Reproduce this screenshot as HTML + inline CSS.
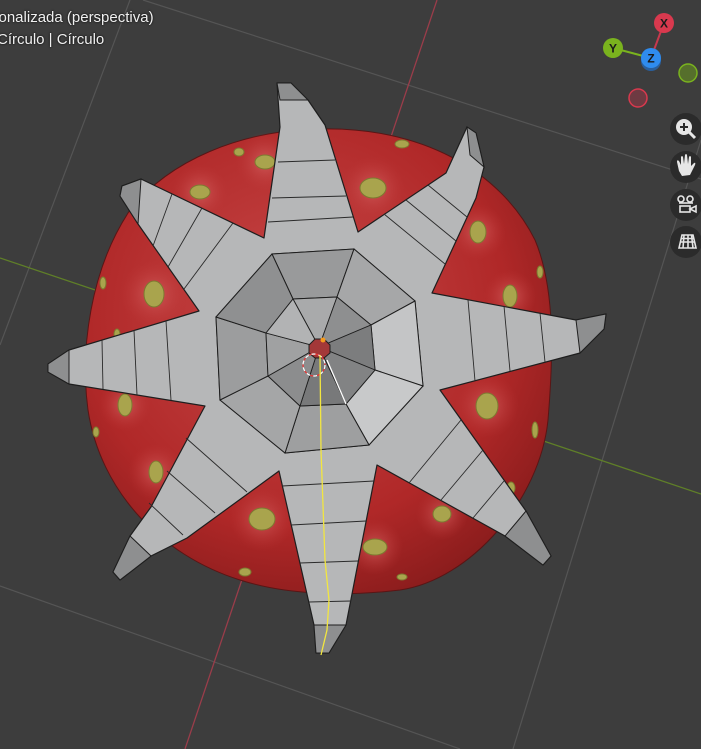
<!DOCTYPE html>
<html><head><meta charset="utf-8"><style>
html,body{margin:0;padding:0;background:#3d3d3d;width:701px;height:749px;overflow:hidden;position:relative;font-family:"Liberation Sans",sans-serif}
.t{position:absolute;color:#f0f0f0;font-size:15px;white-space:nowrap;text-shadow:0 0 2px #000}
</style></head><body>
<svg width="701" height="749" viewBox="0 0 701 749" style="position:absolute;left:0;top:0">
<defs>
<radialGradient id="rb" cx="0.45" cy="0.4" r="0.65">
<stop offset="0" stop-color="#c84848"/><stop offset="0.7" stop-color="#b02828"/><stop offset="1" stop-color="#8a1c1c"/>
</radialGradient>
<radialGradient id="sp" cx="0.5" cy="0.5" r="0.5">
<stop offset="0" stop-color="#d86a6a" stop-opacity="0.7"/><stop offset="1" stop-color="#c03838" stop-opacity="0"/>
</radialGradient>
</defs>
<line x1="130" y1="0" x2="0" y2="345" stroke="#555" stroke-width="1.2"/>
<line x1="143" y1="0" x2="701" y2="179" stroke="#555" stroke-width="1.2"/>
<line x1="701" y1="140" x2="513" y2="749" stroke="#555" stroke-width="1.2"/>
<line x1="0" y1="586" x2="460" y2="749" stroke="#555" stroke-width="1.2"/>
<line x1="437" y1="0" x2="185" y2="749" stroke="#9a3d4a" stroke-width="1.3"/>
<line x1="0" y1="258" x2="701" y2="494" stroke="#5f7f28" stroke-width="1.3"/>
<path d="M318,129 C420,126 500,170 535,240 C556,290 553,360 548,420 C540,500 470,580 400,590 C350,596 290,596 240,580 C160,555 100,490 88,410 C80,350 90,270 130,210 C170,160 240,131 318,129 Z" fill="url(#rb)" stroke="#5a1515" stroke-width="1"/>
<g fill="url(#sp)">
<circle cx="265" cy="162" r="30"/><circle cx="200" cy="192" r="28"/><circle cx="373" cy="188" r="32"/>
<circle cx="154" cy="294" r="34"/><circle cx="478" cy="232" r="28"/><circle cx="510" cy="296" r="26"/>
<circle cx="487" cy="406" r="32"/><circle cx="125" cy="405" r="26"/><circle cx="156" cy="472" r="28"/>
<circle cx="262" cy="519" r="32"/><circle cx="375" cy="547" r="28"/><circle cx="442" cy="514" r="26"/>
</g>
<g fill="#a9a44d" stroke="#7d7a30" stroke-width="1">
<ellipse cx="265" cy="162" rx="10" ry="7"/><ellipse cx="200" cy="192" rx="10" ry="7"/><ellipse cx="373" cy="188" rx="13" ry="10"/>
<ellipse cx="154" cy="294" rx="10" ry="13"/><ellipse cx="478" cy="232" rx="8" ry="11"/><ellipse cx="510" cy="296" rx="7" ry="11"/>
<ellipse cx="487" cy="406" rx="11" ry="13"/><ellipse cx="125" cy="405" rx="7" ry="11"/><ellipse cx="156" cy="472" rx="7" ry="11"/>
<ellipse cx="262" cy="519" rx="13" ry="11"/><ellipse cx="375" cy="547" rx="12" ry="8"/><ellipse cx="442" cy="514" rx="9" ry="8"/>
<ellipse cx="239" cy="152" rx="5" ry="4"/><ellipse cx="308" cy="130" rx="5" ry="3"/><ellipse cx="402" cy="144" rx="7" ry="4"/>
<ellipse cx="103" cy="283" rx="3" ry="6"/><ellipse cx="540" cy="272" rx="3" ry="6"/><ellipse cx="535" cy="430" rx="3" ry="8"/>
<ellipse cx="96" cy="432" rx="3" ry="5"/><ellipse cx="245" cy="572" rx="6" ry="4"/><ellipse cx="402" cy="577" rx="5" ry="3"/>
<ellipse cx="313" cy="186" rx="5" ry="4"/><ellipse cx="511" cy="488" rx="4" ry="6"/><ellipse cx="117" cy="334" rx="3" ry="5"/>
</g>
<polygon points="264,238 280,127 277,83 291,83 308,100 325,125 358,232 446,173 467,127 476,133 484,167 476,198 432,293 576,320 606,314 604,329 580,353 440,390 526,511 551,556 543,565 505,536 377,465 346,625 329,653 316,653 314,625 279,471 187,538 151,556 120,580 113,572 130,536 151,507 205,406 69,384 48,372 48,364 69,350 199,311 138,224 120,196 122,186 141,179" fill="#b6b7b8" stroke="#1e1e1e" stroke-width="1.2" stroke-linejoin="round"/>
<g fill="#8e8f90" stroke="#1e1e1e" stroke-width="1">
<polygon points="277,83 291,83 308,100 280,100"/>
<polygon points="467,127 476,133 484,167 470,155"/>
<polygon points="606,314 604,329 580,353 576,320"/>
<polygon points="551,556 543,565 505,536 526,511"/>
<polygon points="329,653 316,653 314,625 346,625"/>
<polygon points="120,580 113,572 130,536 151,556"/>
<polygon points="48,372 48,364 69,350 69,384"/>
<polygon points="120,196 122,186 141,179 138,224"/>
</g>
<g stroke="#2a2a2a" stroke-width="0.9" fill="none">
<line x1="278" y1="162" x2="335" y2="160"/><line x1="272" y1="198" x2="346" y2="196"/><line x1="268" y1="222" x2="353" y2="217"/>
<line x1="384" y1="214" x2="445" y2="264"/><line x1="406" y1="200" x2="456" y2="241"/><line x1="428" y1="185" x2="467" y2="217"/>
<line x1="468" y1="300" x2="475" y2="381"/><line x1="504" y1="306" x2="510" y2="371"/><line x1="540" y1="313" x2="545" y2="362"/>
<line x1="461" y1="420" x2="409" y2="483"/><line x1="483" y1="450" x2="441" y2="500"/><line x1="504" y1="481" x2="473" y2="518"/>
<line x1="374" y1="481" x2="282" y2="486"/><line x1="366" y1="521" x2="291" y2="525"/><line x1="358" y1="561" x2="300" y2="563"/><line x1="351" y1="601" x2="309" y2="602"/>
<line x1="247" y1="492" x2="186" y2="438"/><line x1="215" y1="513" x2="167" y2="471"/><line x1="183" y1="535" x2="149" y2="503"/>
<line x1="171" y1="400" x2="166" y2="321"/><line x1="137" y1="395" x2="134" y2="330"/><line x1="103" y1="389" x2="102" y2="340"/>
<line x1="184" y1="289" x2="233" y2="223"/><line x1="168" y1="267" x2="202" y2="208"/><line x1="153" y1="246" x2="172" y2="194"/>
</g>
<polygon points="272,254 354,249 415,301 423,386 369,445 285,453 220,400 216,317" fill="#a2a3a4" stroke="#1e1e1e" stroke-width="1"/>
<polygon points="272,254 354,249 337,297 293,299" fill="#999a9b" stroke="#1e1e1e" stroke-width="1"/>
<polygon points="354,249 415,301 371,325 337,297" fill="#a6a7a8" stroke="#1e1e1e" stroke-width="1"/>
<polygon points="415,301 423,386 375,370 371,325" fill="#c4c5c6" stroke="#1e1e1e" stroke-width="1"/>
<polygon points="423,386 369,445 346,404 375,370" fill="#c8c9ca" stroke="#1e1e1e" stroke-width="1"/>
<polygon points="369,445 285,453 300,406 346,404" fill="#9e9fa0" stroke="#1e1e1e" stroke-width="1"/>
<polygon points="285,453 220,400 268,376 300,406" fill="#a5a6a7" stroke="#1e1e1e" stroke-width="1"/>
<polygon points="220,400 216,317 266,333 268,376" fill="#9c9d9e" stroke="#1e1e1e" stroke-width="1"/>
<polygon points="216,317 272,254 293,299 266,333" fill="#8f9091" stroke="#1e1e1e" stroke-width="1"/>
<polygon points="293,299 337,297 319,347" fill="#a9aaab" stroke="#1e1e1e" stroke-width="0.9"/>
<polygon points="337,297 371,325 319,347" fill="#8e8f90" stroke="#1e1e1e" stroke-width="0.9"/>
<polygon points="371,325 375,370 319,347" fill="#7c7d7e" stroke="#1e1e1e" stroke-width="0.9"/>
<polygon points="375,370 346,404 319,347" fill="#828384" stroke="#1e1e1e" stroke-width="0.9"/>
<polygon points="346,404 300,406 319,347" fill="#78797a" stroke="#1e1e1e" stroke-width="0.9"/>
<polygon points="300,406 268,376 319,347" fill="#8c8d8e" stroke="#1e1e1e" stroke-width="0.9"/>
<polygon points="268,376 266,333 319,347" fill="#a0a1a2" stroke="#1e1e1e" stroke-width="0.9"/>
<polygon points="266,333 293,299 319,347" fill="#b2b3b4" stroke="#1e1e1e" stroke-width="0.9"/>
<polygon points="315,339 324,339 330,345 330,353 324,358 315,358 309,353 309,345" fill="#a33838" stroke="#1e1e1e"/>
<circle cx="323" cy="340" r="2.5" fill="#f59a1e"/>
<circle cx="314" cy="365" r="11" fill="none" stroke="#fff" stroke-width="1.2" stroke-dasharray="4 3"/>
<circle cx="314" cy="365" r="11" fill="none" stroke="#e33" stroke-width="1.2" stroke-dasharray="3 4" stroke-dashoffset="3"/>
<path d="M320,355 L321,450 L325,560 L329,600 L327,630 L321,655" fill="none" stroke="#f2e640" stroke-width="1.3"/>
<line x1="327" y1="360" x2="346" y2="404" stroke="#fff" stroke-width="1.3"/>
<line x1="651" y1="58" x2="664" y2="23" stroke="#c8384d" stroke-width="2"/>
<line x1="651" y1="58" x2="613" y2="48" stroke="#7ab31e" stroke-width="2"/>
<circle cx="638" cy="98" r="9" fill="#6e3a42" stroke="#d9394e" stroke-width="1.5"/>
<circle cx="688" cy="73" r="9" fill="#566f2c" stroke="#7ab31e" stroke-width="1.5"/>
<circle cx="651" cy="61" r="10" fill="#2a5f9c"/>
<circle cx="664" cy="23" r="10" fill="#d9394e"/>
<circle cx="613" cy="48" r="10" fill="#7ab31e"/>
<circle cx="651" cy="58" r="10" fill="#2f8cef"/>
<g font-family="Liberation Sans,sans-serif" font-size="12" font-weight="bold" text-anchor="middle" fill="#1a1a1a">
<text x="664" y="27.5">X</text><text x="613" y="52.5">Y</text><text x="651" y="62.5">Z</text>
</g>
<g fill="#2b2b2b">
<circle cx="686" cy="129" r="16"/><circle cx="686" cy="167" r="16"/><circle cx="686" cy="205" r="16"/><circle cx="686" cy="242" r="16"/>
</g>
<g fill="none" stroke="#e6e6e6" stroke-width="2">
<circle cx="684" cy="127" r="7" fill="#e6e6e6"/>
<line x1="689" y1="132" x2="695" y2="138" stroke-width="3"/>
<line x1="680" y1="127" x2="688" y2="127" stroke="#2b2b2b"/><line x1="684" y1="123" x2="684" y2="131" stroke="#2b2b2b"/>
</g>
<path d="M679,171 L677,162 Q677,159 679,161 L681,165 L681,157 Q682,155 683,157 L684,164 L685,155 Q686,153 687,155 L688,164 L689,157 Q690,155 691,157 L691,166 L694,163 Q696,162 695,165 L690,175 L682,176 Z" fill="#e6e6e6"/>
<g fill="none" stroke="#e6e6e6" stroke-width="1.6">
<circle cx="681" cy="199" r="3"/><circle cx="690" cy="199" r="3"/><line x1="679" y1="203" x2="693" y2="203"/>
<rect x="680" y="206" width="10" height="6"/><path d="M690,209 L696,206 L696,212 Z"/>
<path d="M679,248 L682,235 L693,235 L696,248 Z M680.5,242 L695,242 M684,235 L683,248 M688,235 L688,248 M691.5,235 L693,248 M681,238.5 L694,238.5"/>
</g>
</svg>
<div class="t" style="left:-9px;top:9px">sonalizada (perspectiva)</div>
<div class="t" style="left:-3px;top:31px">Círculo | Círculo</div>
</body></html>
